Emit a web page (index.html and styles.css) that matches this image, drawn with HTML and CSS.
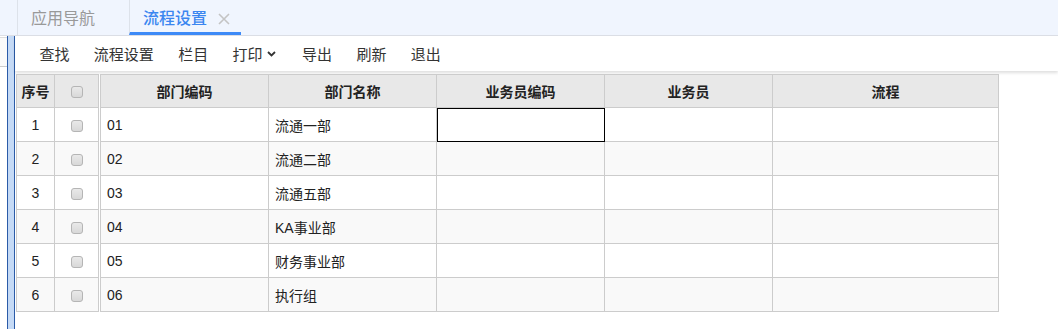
FILE: index.html
```html
<!DOCTYPE html>
<html>
<head>
    <meta charset="utf-8">
    <link rel="stylesheet" href="styles.css">
</head>
<body>

<div class="tabs">
    <div class="tab">应用导航</div>
    <div class="tab active">流程设置<svg class="close" width="12" height="12" viewBox="0 0 12 12"><path d="M1 1l10 10M11 1L1 11" stroke="#c4c4c4" stroke-width="1.6"/></svg></div>
</div>

<div class="main">
    <div class="side"><div class="side-box"></div></div>
    <div class="stripe"></div>
    <div class="content">
        <div class="toolbar">
            <span class="tool">查找</span>
            <span class="tool">流程设置</span>
            <span class="tool">栏目</span>
            <span class="tool">打印<svg class="caret" width="9" height="6" viewBox="0 0 9 6"><path d="M1 1l3.5 3.5L8 1" fill="none" stroke="#333" stroke-width="1.8"/></svg></span>
            <span class="tool">导出</span>
            <span class="tool">刷新</span>
            <span class="tool">退出</span>
        </div>

        <div class="grid">
            <table class="fixed">
                <colgroup><col style="width:38px"><col style="width:44px"></colgroup>
                <tr><th>序号</th><th><span class="chk"></span></th></tr>
                <tr><td class="num">1</td><td class="c"><span class="chk"></span></td></tr>
                <tr><td class="num">2</td><td class="c"><span class="chk"></span></td></tr>
                <tr><td class="num">3</td><td class="c"><span class="chk"></span></td></tr>
                <tr><td class="num">4</td><td class="c"><span class="chk"></span></td></tr>
                <tr><td class="num">5</td><td class="c"><span class="chk"></span></td></tr>
                <tr><td class="num">6</td><td class="c"><span class="chk"></span></td></tr>
            </table>
            <table class="data">
                <colgroup>
                    <col style="width:168px"><col style="width:168px"><col style="width:168px">
                    <col style="width:168px"><col style="width:226px">
                </colgroup>
                <tr><th>部门编码</th><th>部门名称</th><th>业务员编码</th><th>业务员</th><th>流程</th></tr>
                <tr><td>01</td><td>流通一部</td><td class="cur"></td><td></td><td></td></tr>
                <tr><td>02</td><td>流通二部</td><td></td><td></td><td></td></tr>
                <tr><td>03</td><td>流通五部</td><td></td><td></td><td></td></tr>
                <tr><td>04</td><td>KA事业部</td><td></td><td></td><td></td></tr>
                <tr><td>05</td><td>财务事业部</td><td></td><td></td><td></td></tr>
                <tr><td>06</td><td>执行组</td><td></td><td></td><td></td></tr>
            </table>
        </div>
    </div>
</div>

</body>
</html>
```

FILE: styles.css
```css
* {box-sizing: border-box;}
body {
    margin: 0;
    font-family: "Liberation Sans", "Noto Sans CJK SC", sans-serif;
    color: #222;
    background: #fff;
    overflow: hidden;
}

/* Tab strip at the top */
.tabs {
    display: flex;
    height: 36px;
    padding-left: 17px;
    background-color: #f0f5fe;
    border-bottom: 1px solid #dcdfe6;
}
.tab {
    display: flex;
    align-items: center;
    width: 112px;
    height: 35px;
    padding: 2px 0 0 13px;
    font-size: 16px;
    line-height: 20px;
    color: #999;
    border-left: 1px solid #dde2ea;
}
.tab.active {
    color: #3b86f0;
    font-weight: 500;
    border-bottom: 3px solid #3d8af7;
    padding-top: 5px;
}
.tab .close {
    margin-left: 11px;
}

/* Body: left side, blue stripe and content */
.main {
    display: flex;
    height: 293px;
}
.side {
    width: 7px;
    padding-top: 1px;
}
.side-box {
    height: 30px;
    border-top: 1px solid #ddd;
    border-bottom: 1px solid #ccc;
    background: #fafafa;
}
.stripe {
    width: 8px;
    background-color: #c5daf6;
    border-left: 1px solid #2b5ba8;
    border-right: 1px solid #2b5ba8;
}
.content {
    flex: 1;
}

/* Toolbar */
.toolbar {
    display: flex;
    align-items: center;
    height: 35px;
    padding-left: 12px;
    background: #fff;
    box-shadow: 0 2px 3px rgba(0, 0, 0, 0.13);
    font-size: 15px;
    color: #333;
}
.tool {
    display: flex;
    align-items: center;
    padding: 0 12px 0 12.4px;
}
.caret {
    margin-left: 4px;
    margin-right: 2px;
}

/* Grid: frozen columns plus data columns */
.grid {
    display: flex;
    gap: 1px;
    margin: 3px 0 0 1px;
}
table {
    border-collapse: collapse;
    table-layout: fixed;
    font-size: 14px;
}
.fixed {width: 83px;}
.data {width: 899px;}
th, td {
    border: 1px solid #ccc;
    height: 34px;
    padding: 0 6px;
    white-space: nowrap;
    overflow: hidden;
}
th {
    height: 33px;
    background-color: #e8e8e8;
    font-weight: bold;
    text-align: center;
}
tr:nth-child(odd) td {background-color: #f9f9f9;}
td.num, td.c {text-align: center;}
.fixed th {padding: 0;}
td.cur {outline: 1px solid #000; outline-offset: -1px;}

.chk {
    display: inline-block;
    width: 12px;
    height: 12px;
    vertical-align: middle;
    border: 1px solid #b5b5b5;
    border-radius: 3px;
    background: linear-gradient(#e9e9e9, #d8d8d8);
}
```
